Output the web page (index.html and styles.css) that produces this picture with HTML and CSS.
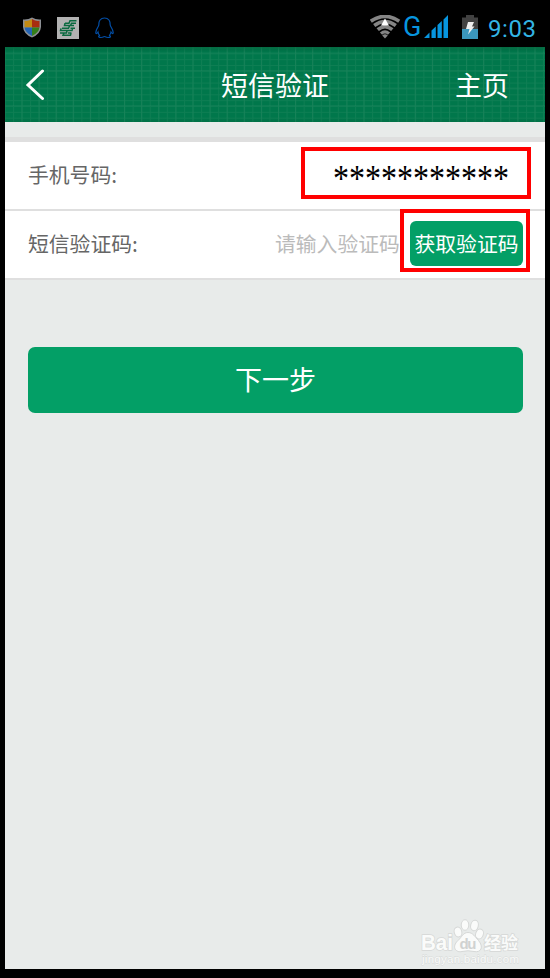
FILE: index.html
```html
<!DOCTYPE html>
<html lang="zh-CN">
<head>
<meta charset="utf-8">
<title>短信验证</title>
<link rel="stylesheet" href="styles.css">
</head>
<body>
<div class="status">
  <svg class="shield" width="20" height="21" viewBox="0 0 20 21">
    <defs><clipPath id="sh"><path d="M10 2Q6 4.500 2.500 3.800V10Q3 15.500 10 19Q17 15.500 17.500 10V3.800Q14 4.500 10 2Z"/></clipPath></defs>
    <path d="M10 .5Q6 3 1 2.500V10Q1.500 17 10 20.500Q18.500 17 19 10V2.500Q14 3 10 .5Z" fill="#8c8f94"/>
    <g clip-path="url(#sh)"><path d="M0 0H10V10.500H0Z" fill="#c28a12"/><path d="M10 0H20V10.500H10Z" fill="#a82c10"/><path d="M0 10.500H10V21H0Z" fill="#2464b4"/><path d="M10 10.500H20V21H10Z" fill="#347f1a"/></g>
  </svg>
  <svg class="bank" width="22" height="22" viewBox="0 0 22 22">
    <path d="M0 0H22V22H0Z" fill="#b2b2b2"/>
    <g fill="none" stroke="#0b6a40" stroke-width="1.500"><path d="M19.500 3.800H13L12 6.200H8M19 6.200H14.500L13.500 8.500M8 6.200L7.500 8.500H17M5 11.300H11.500L12.500 9M18 11.300H13.500M4 11.300L3.500 13.600H15L15.500 12M3 16H9.500L10 13.600M14.500 16H11M7 16L6 18.300H13.500L14 16"/></g>
  </svg>
  <svg class="penguin" width="20" height="22" viewBox="0 0 20 22">
    <path d="M9.500 1C5.500 1 3.500 4 3.800 8C3.500 10 1 12 .8 15.500C.8 17.500 2 16.500 3 15C3.300 17 4 18 4.500 18.500C2.500 20 4.500 20.500 6 20.500C8 20.500 9 19.500 9.500 19.500S11 20.500 13 20.500S16.500 20 14.500 18.500C15 17.500 15.700 16.500 16 15C17 16.500 18.200 17.500 18.200 15.500C18 12 15.500 10 15.200 8C15.500 4 13.500 1 9.500 1Z" fill="none" stroke="#034ea6" stroke-width="1.200"/>
  </svg>
  <span class="space"></span>
  <svg class="wifi" width="32" height="24" viewBox="0 0 32 24">
    <g fill="none" stroke="#858585" stroke-width="3.600"><path d="M.8 6.200Q15-3.500 29.200 6.200"/><path d="M4.200 10.500Q15 2.500 25.800 10.500"/><path d="M7.700 14.600Q15 8.500 22.300 14.600"/><path d="M11 18.600Q15 15 19 18.600" stroke-width="3.200"/></g>
    <path d="M12.200 20.500Q15 18 17.800 20.500L15 23.500Z" fill="#858585"/><path d="M15 3.500L19 10.500H11Z" fill="#fff"/>
  </svg>
  <span class="net">G</span>
  <svg class="signal" width="24" height="23" viewBox="0 0 24 23" fill="#0795df"><path d="M0 23L5.500 17.500V23ZM7.500 15.500L11.800 11.500V23H7.500ZM13.500 10L17.800 6V23H13.500ZM19.500 4.500L24 0V23H19.500Z"/></svg>
  <svg class="battery" width="16" height="24" viewBox="0 0 16 24"><path d="M4 0H12V2.500H16V24H0V2.500H4Z" fill="#414141"/><path d="M0 14H16V24H0Z" fill="#3b97bd"/><path d="M6 7H12L10 11.500H12.500L6 19.500L7.500 14H4Z" fill="#eee"/></svg>
  <span class="clock">9:03</span>
</div>
<main class="screen">
  <header class="header">
    <svg class="grid" width="540" height="75">
      <defs>
        <pattern id="fine" x="-.6" y=".5" width="8.550" height="5.850" patternUnits="userSpaceOnUse"><path d="M0 .5H8.550M.5 0V5.850" stroke="#168258" stroke-width="1"/></pattern>
        <pattern id="wide" x="-.6" y="5.500" width="17.100" height="17.550" patternUnits="userSpaceOnUse"><path d="M0 .5H17.100M.5 0V17.550" stroke="#2a8a64" stroke-width="1"/></pattern>
        <linearGradient id="shade" x2="0" y2="1"><stop offset="0" stop-color="#005a35" stop-opacity=".5"/><stop offset=".07" stop-color="#005a35" stop-opacity="0"/><stop offset=".94" stop-color="#005a35" stop-opacity="0"/><stop offset="1" stop-color="#005a35" stop-opacity=".2"/></linearGradient>
      </defs>
      <rect width="540" height="75" fill="#00774b"/><rect width="540" height="75" fill="url(#fine)" opacity=".65"/><rect width="540" height="75" fill="url(#wide)" opacity=".35"/><rect width="540" height="75" fill="url(#shade)"/>
    </svg>
    <svg class="back" width="20" height="32" viewBox="0 0 20 32"><path d="M17.500 2L3 16L17.500 29.500" fill="none" stroke="#fff" stroke-width="3" stroke-linecap="round"/></svg>
    <h1 class="title">短信验证</h1>
    <span class="home">主页</span>
  </header>
  <section class="form">
    <div class="row"><span class="label">手机号码:</span><div class="mark phone"><span class="stars">***********</span></div></div>
    <div class="row code"><span class="label">短信验证码:</span><span class="hint">请输入验证码</span><div class="mark get"><button class="fetch">获取验证码</button></div></div>
  </section>
  <button class="next">下一步</button>
  <svg class="brand" width="104" height="48" viewBox="0 0 104 48">
    <g fill="#fafbfa" stroke="#d6d8d7" stroke-width="1">
      <ellipse cx="38" cy="13" rx="3.800" ry="5" transform="rotate(-15 38 13)"/><ellipse cx="45" cy="6" rx="3.800" ry="5.300"/><ellipse cx="54.500" cy="6.500" rx="3.800" ry="5.300" transform="rotate(12 54.500 6.500)"/><ellipse cx="59.500" cy="15" rx="3.800" ry="5" transform="rotate(20 59.500 15)"/>
      <path d="M48 13.500C43 13.500 42 18 38 21.500C31 28 36 34 42 32.500Q48 31 54 32.500C61 34 64 28 58.500 21.500C55 18 53 13.500 48 13.500Z"/>
    </g>
    <g class="brand-text"><text class="latin" x="1" y="31" textLength="32" lengthAdjust="spacingAndGlyphs">Bai</text><text class="cn" x="64" y="29.500" textLength="34">经验</text><text class="url" x="2" y="43.500" textLength="97">jingyan.baidu.com</text></g>
    <text class="du" x="39.500" y="29.500" textLength="17">du</text>
  </svg>
</main>
</body>
</html>
```
FILE: styles.css
```css
* { box-sizing: border-box; }
body {
  margin: 0;
  width: 550px;
  height: 978px;
  overflow: hidden;
  background: #000;
  font-family: "Noto Sans CJK SC", sans-serif;
}
.status {
  display: flex;
  align-items: flex-start;
  height: 47px;
  padding: 0 14px 0 22px;
}
.shield { margin-top: 17px; }
.bank { margin: 17px 0 0 15px; }
.penguin { margin: 17px 0 0 16px; }
.space { flex: 1; }
.wifi { margin-top: 15px; }
.net {
  width: 22px;
  margin: 11px 0 0 1px;
  font: 27px/32px Roboto, sans-serif;
  color: #0795df;
}
.signal { margin: 15px 0 0 -1px; }
.battery { margin: 15px 0 0 14px; }
.clock {
  width: 48px;
  margin: 13px 0 0 10px;
  font: 24px/32px Roboto, sans-serif;
  letter-spacing: .6px;
  color: #33b5e5;
  white-space: nowrap;
}
.screen {
  display: flex;
  flex-direction: column;
  width: 540px;
  height: 922px;
  margin: 0 5px;
  background: #e8ebea;
}
.header {
  position: relative;
  display: grid;
  grid-template-columns: 150px 1fr 150px;
  align-items: center;
  height: 75px;
  padding: 0 36px 0 20px;
  color: #fff;
  font-size: 27px;
}
.grid { position: absolute; inset: 0; }
.back, .title, .home { position: relative; }
.title {
  margin: 0 0 0 16px;
  font-size: 27px;
  font-weight: 400;
  line-height: 40px;
  text-align: center;
}
.home { text-align: right; line-height: 40px; }
.form {
  margin-top: 15px;
  border-top: 5px solid #dfdfdf;
}
.row {
  display: flex;
  align-items: flex-start;
  height: 69px;
  padding-left: 23px;
  background: #fff;
  border-bottom: 2px solid #dfdfdf;
}
.label {
  flex: 1;
  font-size: 20.8px;
  line-height: 64px;
  color: #666;
}
.mark { border: 4px solid #f00; }
.phone {
  width: 230px;
  height: 52px;
  margin: 5px 14px 0 0;
  padding-left: 28px;
}
.stars {
  display: block;
  font: 32px/52px "Liberation Serif", serif;
  color: #000;
  transform: scaleY(1.2);
  transform-origin: 0 20px;
}
.hint {
  width: 125px;
  font-size: 20.8px;
  line-height: 64px;
  color: #bbb;
  white-space: nowrap;
}
.get {
  width: 130px;
  height: 63px;
  margin: -2px 15px 0 0;
  padding: 8px 0 0 6px;
}
button {
  display: block;
  padding: 0;
  border: 0;
  background: #039f66;
  color: #fff;
  font-family: inherit;
}
.fetch {
  width: 113px;
  height: 45px;
  border-radius: 6px;
  font-size: 20.8px;
  line-height: 45px;
}
.next {
  width: 495px;
  height: 66px;
  margin: 67px 0 0 23px;
  padding-bottom: 2px;
  border-radius: 7px;
  font-size: 27px;
  line-height: 64px;
}
.brand { align-self: flex-end; margin: auto 21px 2px 0; }
.brand-text {
  fill: #fafbfa;
  stroke: #d6d8d7;
  stroke-width: 1.5px;
  paint-order: stroke;
}
.latin { font: bold 22px "Liberation Sans", sans-serif; }
.cn { font: bold 17px "Noto Sans CJK SC", sans-serif; }
.url { font: 11.5px "Liberation Sans", sans-serif; stroke-width: .8px; }
.du { font: bold 15px "Liberation Sans", sans-serif; fill: #d0d2d1; }
```
